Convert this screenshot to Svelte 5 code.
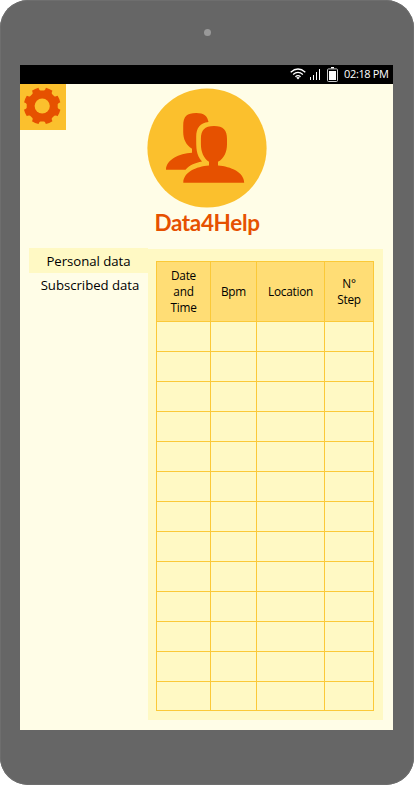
<script>
  const headers = [['Date', 'and', 'Time'], ['Bpm'], ['Location'], ['N°', 'Step']];
  const cells = Array.from({ length: 13 * 4 });
  const notches = [0, 45, 90, 135, 180, 225, 270, 315];
</script>

<div class="phone">
  <div class="camera"></div>
  <main class="screen">
    <div class="status">
      <svg class="wifi" width="16" height="12" viewBox="0 0 16 12" fill="none" stroke="#fff" stroke-width="1.3">
        <path d="M.7 4.2Q8-2.3 15.3 4.2M3.1 6.5Q8 2.3 12.9 6.5M5.4 8.7Q8 6.6 10.6 8.7" />
        <path d="M6.2 9.5Q8 8.3 9.8 9.5L8 11.5Z" fill="#fff" stroke="none" />
      </svg>
      <svg class="signal" width="11" height="12" viewBox="0 0 11 12" fill="#fff">
        <path d="M0 9h1v3H0zM3 7h1v5H3zM6 4h1v8H6zM9 1h1v11H9z" />
      </svg>
      <svg class="battery" width="11" height="15" viewBox="0 0 11 15">
        <path d="M4 .7h3" stroke="#fff" stroke-width="1.4" />
        <rect x=".5" y="1.9" width="10" height="12.6" rx="1" fill="none" stroke="#ccc" />
        <path d="M2 4h7v9H2z" fill="#fff" />
      </svg>
      <span class="time">02:18 PM</span>
    </div>
    <header>
      <button class="settings" aria-label="Settings">
        <svg width="46" height="46" viewBox="0 0 46 46">
          <circle cx="22.2" cy="22" r="18.5" fill="#e65100" />
          {#each notches as angle}
            <path d="M18.2 2.5Q19 6.3 20.6 6.5H23.8Q25.4 6.3 26.2 2.5Z" fill="#fbc02d" transform="rotate({angle} 22.2 22)" />
          {/each}
          <circle cx="22.2" cy="22" r="7.6" fill="#fbc02d" />
        </svg>
      </button>
      <div class="brand">
        <svg width="120" height="120" viewBox="0 0 120 120">
          <circle cx="60" cy="60" r="59.6" fill="#fbc02d" />
          <path d="M19 81.7C19 72 32 65.5 45 64.8V60.7C39 57 36.2 51 36.2 44V38C36.2 28 40 25 49.2 25C57 25 60.5 28 61.5 34C53 35 49.2 40 49.2 49C49.2 60 49 67 55 73.6C48 75 43 77 38.5 81.7Z" fill="#e65100" />
          <path d="M36.3 94.7C36.3 84.5 49 78.4 62 77.5V73.8C56.8 70.5 53.9 64 53.9 56V51C53.9 42 57.5 38 67 38C76.5 38 80 42 80 51V56C80 64 77 70.5 71 73.8V77.5C84 78.4 97.2 84.5 97.2 94.7Z" fill="#e65100" />
        </svg>
        <h1>Data4Help</h1>
      </div>
    </header>
    <div class="content">
      <nav>
        <div class="item active"><span>Personal data</span></div>
        <div class="item"><span>Subscribed data</span></div>
      </nav>
      <section>
        <div class="table">
          {#each headers as lines}
            <div class="cell head">
              {#each lines as line}<span>{line}</span>{/each}
            </div>
          {/each}
          {#each cells as _}<div class="cell"></div>{/each}
        </div>
      </section>
    </div>
  </main>
</div>

<style>
  :global(body) { background: #fff; }
  .phone {
    box-sizing: border-box; width: 414px; height: 785px; padding: 0 21px 0 20px;
    background: #666; border-radius: 28px; box-shadow: inset 0 0 0 1px #6e6e6e;
    display: flex; flex-direction: column; overflow: hidden;
    font-family: "Open Sans", "Noto Sans", sans-serif; color: #000;
  }
  .camera { width: 7px; height: 7px; border-radius: 50%; background: #999; margin: 28.5px 0 29.5px 183.5px; flex: none; }
  .screen { width: 373px; height: 665px; background: #fffde7; flex: none; }
  .status { display: flex; align-items: flex-start; height: 19px; background: #000; color: #fff; }
  .wifi { margin: 3px 0 0 270px; }
  .signal { margin: 3px 0 0 4px; }
  .battery { margin: 2px 0 0 6px; }
  .time { margin-left: 6px; font-size: 11px; line-height: 18px; white-space: nowrap; letter-spacing: -.35px; }
  header { display: flex; height: 164px; }
  .settings { display: block; width: 46px; height: 46px; padding: 0; border: 0; background: #fbc02d; }
  .settings svg, .brand svg { display: block; }
  .brand { width: 120px; margin: 4px 0 0 81px; display: flex; flex-direction: column; align-items: center; }
  h1 { margin: 0; font: bold 22.5px/29px Lato, sans-serif; color: #e65100; letter-spacing: -.35px; white-space: nowrap; }
  .content { display: flex; padding-left: 9px; }
  nav { width: 119px; }
  .item { height: 25px; text-align: center; font-size: 13.2px; line-height: 26px; letter-spacing: -.03px; white-space: nowrap; }
  .item + .item { height: 24px; line-height: 24px; padding-left: 3px; }
  .active { background: #fff9c4; }
  section { box-sizing: border-box; width: 235px; height: 471px; margin-top: 1px; padding: 12px 9px 0 8px; background: #fff9c4; }
  .table {
    display: grid; grid-template-columns: 54px 46px 68px 49px; grid-template-rows: 60px repeat(12, 30px) 29px;
    width: 217px; border: solid #fbc938; border-width: 0 1px 1px 0;
  }
  .cell { border: solid #fbc938; border-width: 1px 0 0 1px; }
  .head { display: flex; flex-direction: column; justify-content: center; align-items: center; padding-bottom: 2px; background: #ffdd75; font-size: 11.8px; line-height: 16px; letter-spacing: -.25px; }
</style>
